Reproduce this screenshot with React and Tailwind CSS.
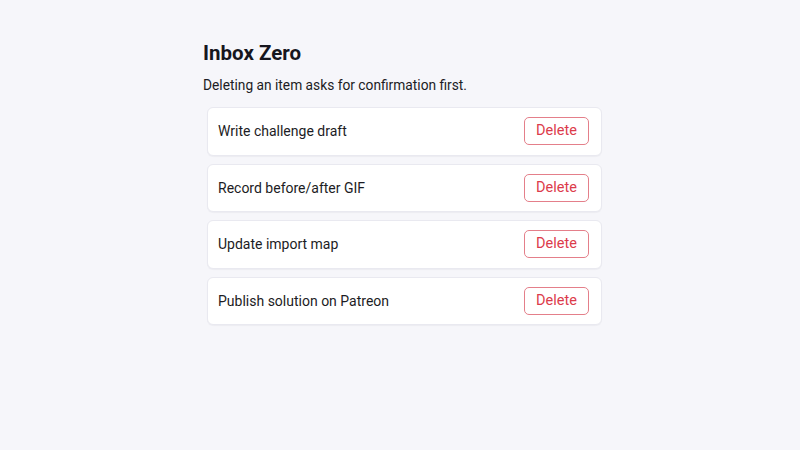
const items = [
  'Write challenge draft',
  'Record before/after GIF',
  'Update import map',
  'Publish solution on Patreon',
];

function Row({ label }) {
  return (
    <li className="flex items-center justify-between h-[48.5px] pl-[10px] pr-[12px] bg-white border border-[#e9e9f0] rounded-[6px] shadow-[0_1px_1px_rgba(20,20,40,0.04)]">
      <span className="text-[14px] text-[#1c1c24] pt-[1px]">{label}</span>
      <button
        type="button"
        className="h-[28px] w-[65px] border border-[#e47f8a] rounded-[5px] text-[14.5px] text-[#dc3b4b] bg-white"
      >
        Delete
      </button>
    </li>
  );
}

export default function App() {
  return (
    <div
      className="min-h-screen bg-[#f6f6fa] pt-[41px]"
      style={{ fontFamily: 'Roboto, "Liberation Sans", sans-serif' }}
    >
      <div className="w-[400px] ml-[202px]">
        <h1 className="text-[20.5px] font-bold text-[#16161e] leading-[24px] pl-[1px]">Inbox Zero</h1>

        <p className="mt-[10px] text-[13.75px] text-[#1c1c24] leading-[20px] pl-[1px]">
          Deleting an item asks for confirmation first.
        </p>

        <ul className="mt-[12px] ml-[5px] w-[395px] flex flex-col gap-[8px]">
          {items.map((it) => (
            <Row key={it} label={it} />
          ))}
        </ul>
      </div>
    </div>
  );
}
